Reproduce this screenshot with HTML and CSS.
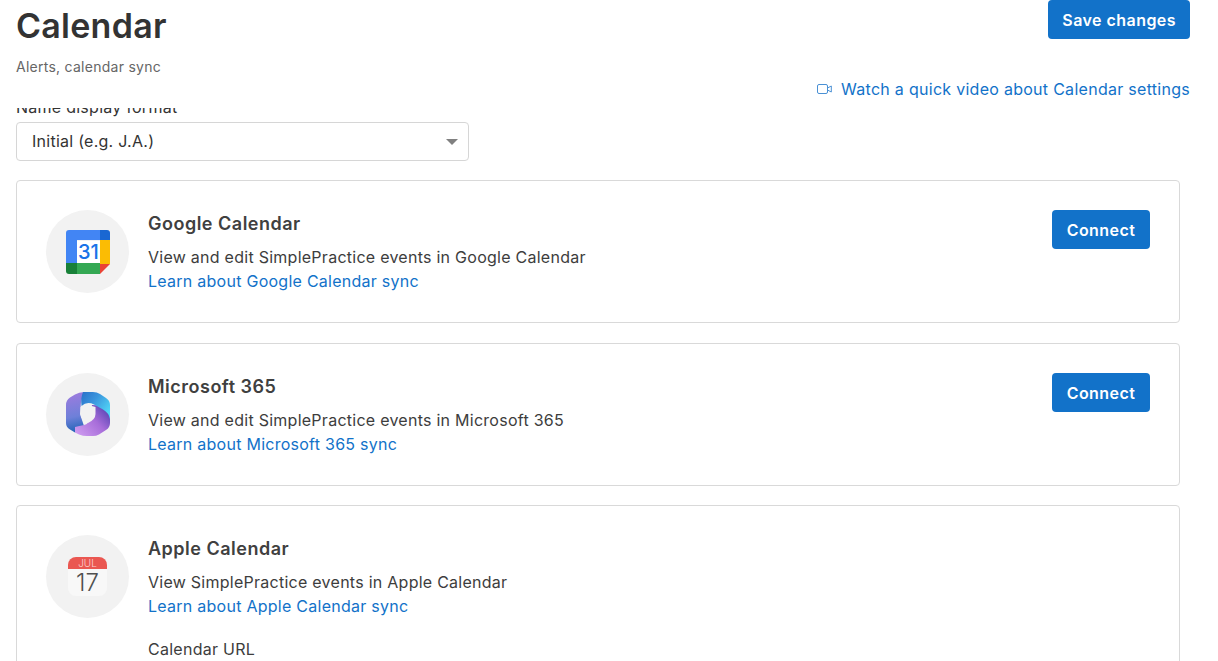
FILE: index.html
```html
<!DOCTYPE html>
<html lang="en">
<head>
<meta charset="utf-8">
<title>Calendar</title>
<link rel="stylesheet" href="styles.css">
</head>
<body>
<div class="page">
  <header class="header">
    <div class="heading">
      <h1 class="title">Calendar</h1>
      <p class="subtitle">Alerts, calendar sync</p>
    </div>
    <div class="actions">
      <button class="btn">Save changes</button>
      <a class="video-link" href="#">
        <svg class="video-icon" width="15" height="10" viewBox="0 0 15 10" fill="none" stroke="#4a90d4" stroke-width="1">
          <rect x="0.5" y="0.5" width="10" height="9" rx="1.5"/>
          <path d="M10.5 4l3.8-2v6l-3.800-2" stroke-linejoin="round"/>
        </svg>
        <span>Watch a quick video about Calendar settings</span>
      </a>
    </div>
  </header>
  <main class="content">
    <label class="field-label">Name display format</label>
    <div class="select">
      <span>Initial (e.g. J.A.)</span>
      <span class="caret"></span>
    </div>

    <section class="card">
      <div class="logo">
        <svg width="44" height="44" viewBox="0 0 44 44">
          <path d="M11 11h23v22H11z" fill="#fff"/>
          <path d="M34 44l10-10H34z" fill="#ea4335"/>
          <path d="M34 10h10V3a3 3 0 0 0-3-3h-7z" fill="#1967d2"/>
          <path d="M34 10h10v24H34z" fill="#fbbc04"/>
          <path d="M11 33h23v11H11z" fill="#34a853"/>
          <path d="M0 33v8a3 3 0 0 0 3 3h8V33z" fill="#188038"/>
          <path d="M3 0a3 3 0 0 0-3 3v30h11V10h23V0z" fill="#4285f4"/>
          <text x="22.500" y="29" class="gcal-num">31</text>
        </svg>
      </div>
      <div class="body">
        <h2 class="name">Google Calendar</h2>
        <p class="desc">View and edit SimplePractice events in Google Calendar</p>
        <a class="link" href="#">Learn about Google Calendar sync</a>
      </div>
      <button class="btn btn-connect">Connect</button>
    </section>

    <section class="card">
      <div class="logo">
        <svg width="44" height="44" viewBox="0 0 44 44">
          <defs>
            <linearGradient id="m1" x1="0" y1="0" x2="1" y2="0.7"><stop offset="0" stop-color="#2a6fc8"/><stop offset="0.45" stop-color="#3a95dd"/><stop offset="1" stop-color="#52d8f7"/></linearGradient>
            <linearGradient id="m2" x1="0.5" y1="0" x2="0.6" y2="1"><stop offset="0" stop-color="#9d7bde"/><stop offset="0.6" stop-color="#6e80d9"/><stop offset="1" stop-color="#1f63b5"/></linearGradient>
            <linearGradient id="m3" x1="0" y1="0.9" x2="1" y2="0.1"><stop offset="0" stop-color="#cf9cf0"/><stop offset="0.55" stop-color="#a76dd9"/><stop offset="1" stop-color="#4d3fae"/></linearGradient>
          </defs>
          <path d="M18 0Q13 0 9 2.500L4 5.500Q0 8 0 13V31Q0 35 4 37.500L9 40.500L18 34L14 22L15 10Z" fill="url(#m2)"/>
          <path d="M44 24Q44 20 42 18Q36 13 26 13L24 25Q23 32 18 33Q13 34 9 35L9 40.500L13 42.500Q17 44 21 44H27Q30 44 33 42.500L40 38Q44 35.500 44 31Z" fill="url(#m3)"/>
          <path d="M17 0H27Q31 0 34 2L40 6Q44 8.500 44 13V27Q43 21 37 17.500L28 12.500Q21 9 15.500 14Q14.500 6 17 0Z" fill="url(#m1)"/>
          <path d="M22 13.500Q26 13.500 29.500 15V22Q29.500 27.500 22 31Q14.500 27.500 14.500 22V15Q18 13.500 22 13.500Z" fill="#f2f2f2"/>
        </svg>
      </div>
      <div class="body">
        <h2 class="name">Microsoft 365</h2>
        <p class="desc">View and edit SimplePractice events in Microsoft 365</p>
        <a class="link" href="#">Learn about Microsoft 365 sync</a>
      </div>
      <button class="btn btn-connect">Connect</button>
    </section>

    <section class="card">
      <div class="logo">
        <div class="apple">
          <div class="apple-month">JUL</div>
          <div class="apple-day">17</div>
        </div>
      </div>
      <div class="body">
        <h2 class="name">Apple Calendar</h2>
        <p class="desc">View SimplePractice events in Apple Calendar</p>
        <a class="link" href="#">Learn about Apple Calendar sync</a>
        <p class="url-label">Calendar URL</p>
      </div>
    </section>
  </main>
</div>
</body>
</html>
```

FILE: styles.css
```css
* { box-sizing: border-box; }
html, body { margin: 0; height: 100%; overflow: hidden; background: #fff; }
body { font-family: Inter, "Liberation Sans", sans-serif; color: #3d3d3d; font-size: 16px; letter-spacing: 0.26px; }
.page { display: flex; flex-direction: column; height: 661px; }
.header {
  display: flex; justify-content: space-between; align-items: flex-start;
  height: 108px; padding: 0 28px 0 16px; background: #fff; flex: none;
}
.title { margin: 5px 0 0; font-size: 34px; line-height: 41px; font-weight: 600; color: #333; }
.subtitle { margin: 12px 0 0; font-size: 14px; line-height: 18px; color: #666; }
.actions { display: flex; flex-direction: column; align-items: flex-end; }
.btn {
  border: 0; background: #1272c9; color: #fff; font: 600 16px/19px Inter, "Liberation Sans", sans-serif;
  letter-spacing: 0.45px; padding: 11px 14px 9px; height: 39px; border-radius: 4px; flex: none;
}
.btn-connect { width: 98px; padding-left: 0; padding-right: 0; }
.video-link { margin-top: 39px; display: flex; align-items: center; gap: 9px; color: #1272c9; text-decoration: none; font-size: 16px; line-height: 22px; letter-spacing: 0.28px; }
.content { flex: 1; overflow: hidden; padding: 0 38px 0 16px; }
.field-label { display: block; margin-top: -11px; font-size: 16px; line-height: 20px; color: #333; }
.select {
  display: flex; justify-content: space-between; align-items: center;
  width: 453px; height: 39px; margin-top: 5px; padding: 0 10px 2px 15px;
  border: 1px solid #d6d6d6; border-radius: 4px; color: #333; line-height: 20px;
}
.caret { width: 0; height: 0; margin-top: 2px; border-left: 6px solid transparent; border-right: 6px solid transparent; border-top: 6px solid #808080; }
.card {
  display: flex; align-items: flex-start; height: 143px; margin-top: 19.5px; padding: 29px;
  border: 1px solid #d9d9d9; border-radius: 4px;
}
.card:last-child { height: auto; min-height: 143px; }
.select + .card { margin-top: 19px; }
.logo {
  width: 83px; height: 83px; border-radius: 50%; background: #f2f2f2; flex: none;
  display: flex; align-items: center; justify-content: center; margin-right: 19px;
}
.gcal-num { font: 500 20px Inter, "Liberation Sans", sans-serif; fill: #1a73e8; text-anchor: middle; letter-spacing: 0; }
.body { flex: 1; }
.name { margin: 1px 0 0; font-size: 18px; line-height: 26px; font-weight: 600; color: #404040; letter-spacing: 0.5px; }
.desc { margin: 8px 0 0; line-height: 24px; }
.link { display: block; color: #1272c9; text-decoration: none; line-height: 25px; }
.url-label { margin: 18px 0 0; line-height: 24px; }
.apple { width: 39px; height: 39px; border-radius: 8px; background: #f8f8f8; overflow: hidden; text-align: center; letter-spacing: 0; }
.apple-month { height: 12px; background: #ea5751; color: #fbd5d2; font-size: 10px; font-weight: 300; line-height: 13px; }
.apple-day { color: #505050; font-size: 24px; font-weight: 300; line-height: 27px; }
```
